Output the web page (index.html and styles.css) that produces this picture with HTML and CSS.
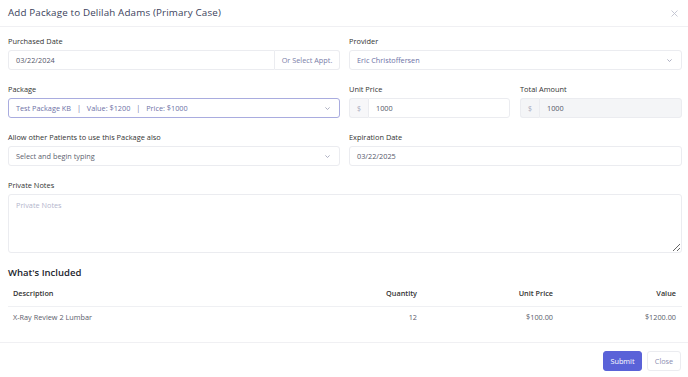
FILE: index.html
```html
<!DOCTYPE html>
<html lang="en">
<head>
<meta charset="utf-8">
<title>Add Package</title>
<link rel="stylesheet" href="styles.css">
</head>
<body>
<div class="modal">
  <div class="modal-header">
    <h2 class="modal-title">Add Package to Delilah Adams (Primary Case)</h2>
    <span class="close-x">
      <svg width="7" height="7" viewBox="0 0 7 7"><path d="M0.5 0.5L6.5 6.5M6.5 0.5L0.5 6.5" stroke="#c0c2cf" stroke-width="0.9"/></svg>
    </span>
  </div>
  <div class="modal-body">
    <div class="form-grid">
      <div class="field">
        <label class="label">Purchased Date</label>
        <div class="input-group">
          <div class="control grow">03/22/2024</div>
          <div class="addon-btn">Or Select Appt.</div>
        </div>
      </div>
      <div class="field">
        <label class="label">Provider</label>
        <div class="control select value-purple">Eric Christoffersen<span class="chev"><svg width="5" height="3" viewBox="0 0 5 3"><path d="M0.4 0.4L2.5 2.5L4.6 0.4" fill="none" stroke="#9a9db3" stroke-width="0.8"/></svg></span></div>
      </div>
      <div class="field">
        <label class="label">Package</label>
        <div class="control select focused value-purple"><span class="pkg">Test Package KB <span class="sep">|</span> Value: $1200 <span class="sep">|</span> Price: $1000</span><span class="chev"><svg width="5" height="3" viewBox="0 0 5 3"><path d="M0.4 0.4L2.5 2.5L4.6 0.4" fill="none" stroke="#9a9db3" stroke-width="0.8"/></svg></span></div>
      </div>
      <div class="split">
        <div class="field">
          <label class="label">Unit Price</label>
          <div class="input-group">
            <div class="prefix">$</div>
            <div class="control grow">1000</div>
          </div>
        </div>
        <div class="field">
          <label class="label">Total Amount</label>
          <div class="input-group disabled">
            <div class="prefix">$</div>
            <div class="control grow">1000</div>
          </div>
        </div>
      </div>
      <div class="field">
        <label class="label">Allow other Patients to use this Package also</label>
        <div class="control select placeholder-dark">Select and begin typing<span class="chev"><svg width="5" height="3" viewBox="0 0 5 3"><path d="M0.4 0.4L2.5 2.5L4.6 0.4" fill="none" stroke="#9a9db3" stroke-width="0.8"/></svg></span></div>
      </div>
      <div class="field">
        <label class="label">Expiration Date</label>
        <div class="control">03/22/2025</div>
      </div>
    </div>
    <div class="field notes">
      <label class="label">Private Notes</label>
      <textarea class="textarea" placeholder="Private Notes"></textarea>
    </div>
    <h3 class="section-title">What's Included</h3>
    <table class="items">
      <thead>
        <tr>
          <th class="left">Description</th>
          <th class="right">Quantity</th>
          <th class="right">Unit Price</th>
          <th class="right">Value</th>
        </tr>
      </thead>
      <tbody>
        <tr>
          <td class="left">X-Ray Review 2 Lumbar</td>
          <td class="right">12</td>
          <td class="right">$100.00</td>
          <td class="right">$1200.00</td>
        </tr>
      </tbody>
    </table>
  </div>
  <div class="modal-footer">
    <button class="btn btn-primary">Submit</button>
    <button class="btn btn-light">Close</button>
  </div>
</div>
</body>
</html>
```
FILE: styles.css
```css
* { box-sizing: border-box; }
html, body { margin: 0; padding: 0; background: #fff; }
body {
  font-family: "Open Sans", "DejaVu Sans", sans-serif;
  font-size: 7.4px;
  color: #3d3f4e;
  width: 688px;
  height: 377px;
  overflow: hidden;
}
.modal { width: 688px; }
.modal-header {
  height: 27px;
  display: flex;
  align-items: center;
  justify-content: space-between;
  padding: 0 10px 1px 8px;
  border-bottom: 1px solid #f0f0f3;
}
.modal-title {
  margin: 0;
  font-size: 9.8px;
  font-weight: 500;
  color: #3b3f5c;
  letter-spacing: 0.15px;
}
.close-x { display: flex; margin-top: 1px; }
.modal-body { padding: 8px 6px 0 8px; }
.form-grid {
  display: grid;
  grid-template-columns: 332px 333px;
  column-gap: 9px;
  row-gap: 13px;
}
.split {
  display: grid;
  grid-template-columns: 161px 162px;
  column-gap: 10px;
}
.field { display: flex; flex-direction: column; }
.label {
  height: 12px;
  line-height: 12px;
  margin-bottom: 3px;
  font-size: 7.4px;
  font-weight: 500;
  color: #333;
}
.control {
  height: 20px;
  border: 1px solid #ebecf0;
  border-radius: 3px;
  padding: 0 7px;
  display: flex;
  align-items: center;
  color: #55576a;
  font-size: 7.3px;
  background: #fff;
}
.select { justify-content: space-between; }
.chev { display: flex; margin-right: 2px; }
.value-purple { color: #6d71a6; }
.placeholder-dark { color: #5d5f70; }
.focused { border-color: #a9acdf; }
.sep { margin: 0 4px; }
.input-group { display: flex; height: 20px; }
.input-group .grow { flex: 1; }
.input-group .control.grow:first-child { border-radius: 3px 0 0 3px; }
.addon-btn {
  width: 65px;
  border: 1px solid #ebecf0;
  border-left: none;
  border-radius: 0 3px 3px 0;
  display: flex;
  align-items: center;
  justify-content: center;
  color: #7a7ea8;
  font-size: 7.3px;
}
.prefix {
  width: 19px;
  border: 1px solid #ebecf0;
  border-right: none;
  border-radius: 3px 0 0 3px;
  background: #f7f7f9;
  display: flex;
  align-items: center;
  justify-content: center;
  color: #a7a9bd;
  font-size: 7px;
}
.input-group .prefix + .control { border-radius: 0 3px 3px 0; padding-left: 7px; }
.disabled .control { background: #f4f5f7; }
.disabled .prefix { background: #f4f5f7; }
.notes { margin-top: 13px; }
.textarea {
  height: 59px;
  width: 674px;
  border: 1px solid #ebecf0;
  border-radius: 3px;
  padding: 5px 7px;
  resize: vertical;
  font-family: "Open Sans", "DejaVu Sans", sans-serif;
  font-size: 7.3px;
  color: #55576a;
  outline: none;
}
.textarea::placeholder { color: #b3b5cc; }
.section-title {
  margin: 13px 0 0 0;
  height: 13px;
  line-height: 13px;
  font-size: 9.5px;
  font-weight: 600;
  color: #22232c;
}
.items {
  width: 674px;
  border-collapse: collapse;
  margin-top: 2px;
  font-size: 7.3px;
}
.items th {
  height: 25px;
  font-weight: 600;
  color: #333;
  border-bottom: 1px solid #eff0f3;
  padding: 0 6px 1px 5px;
}
.items td {
  height: 21px;
  color: #5a5c6a;
  padding: 0 6px 0 5px;
}
.items .left { text-align: left; }
.items .right { text-align: right; }
.items th:nth-child(1) { width: 275px; }
.items th:nth-child(2) { width: 140px; }
.items th:nth-child(3) { width: 136px; }
.modal-footer {
  margin-top: 15px;
  border-top: 1px solid #f0f0f3;
  display: flex;
  justify-content: flex-end;
  gap: 5px;
  padding: 8px 7px 0 0;
}
.btn {
  height: 20px;
  border-radius: 3px;
  font-family: "Open Sans", "DejaVu Sans", sans-serif;
  font-size: 7.3px;
  padding: 0;
  cursor: pointer;
}
.btn-primary {
  background: #5a62d8;
  border: 1px solid #5a62d8;
  color: #fff;
  width: 39px;
}
.btn-light {
  background: #fff;
  border: 1px solid #ebecf0;
  color: #8a8db0;
  width: 34px;
}
```
